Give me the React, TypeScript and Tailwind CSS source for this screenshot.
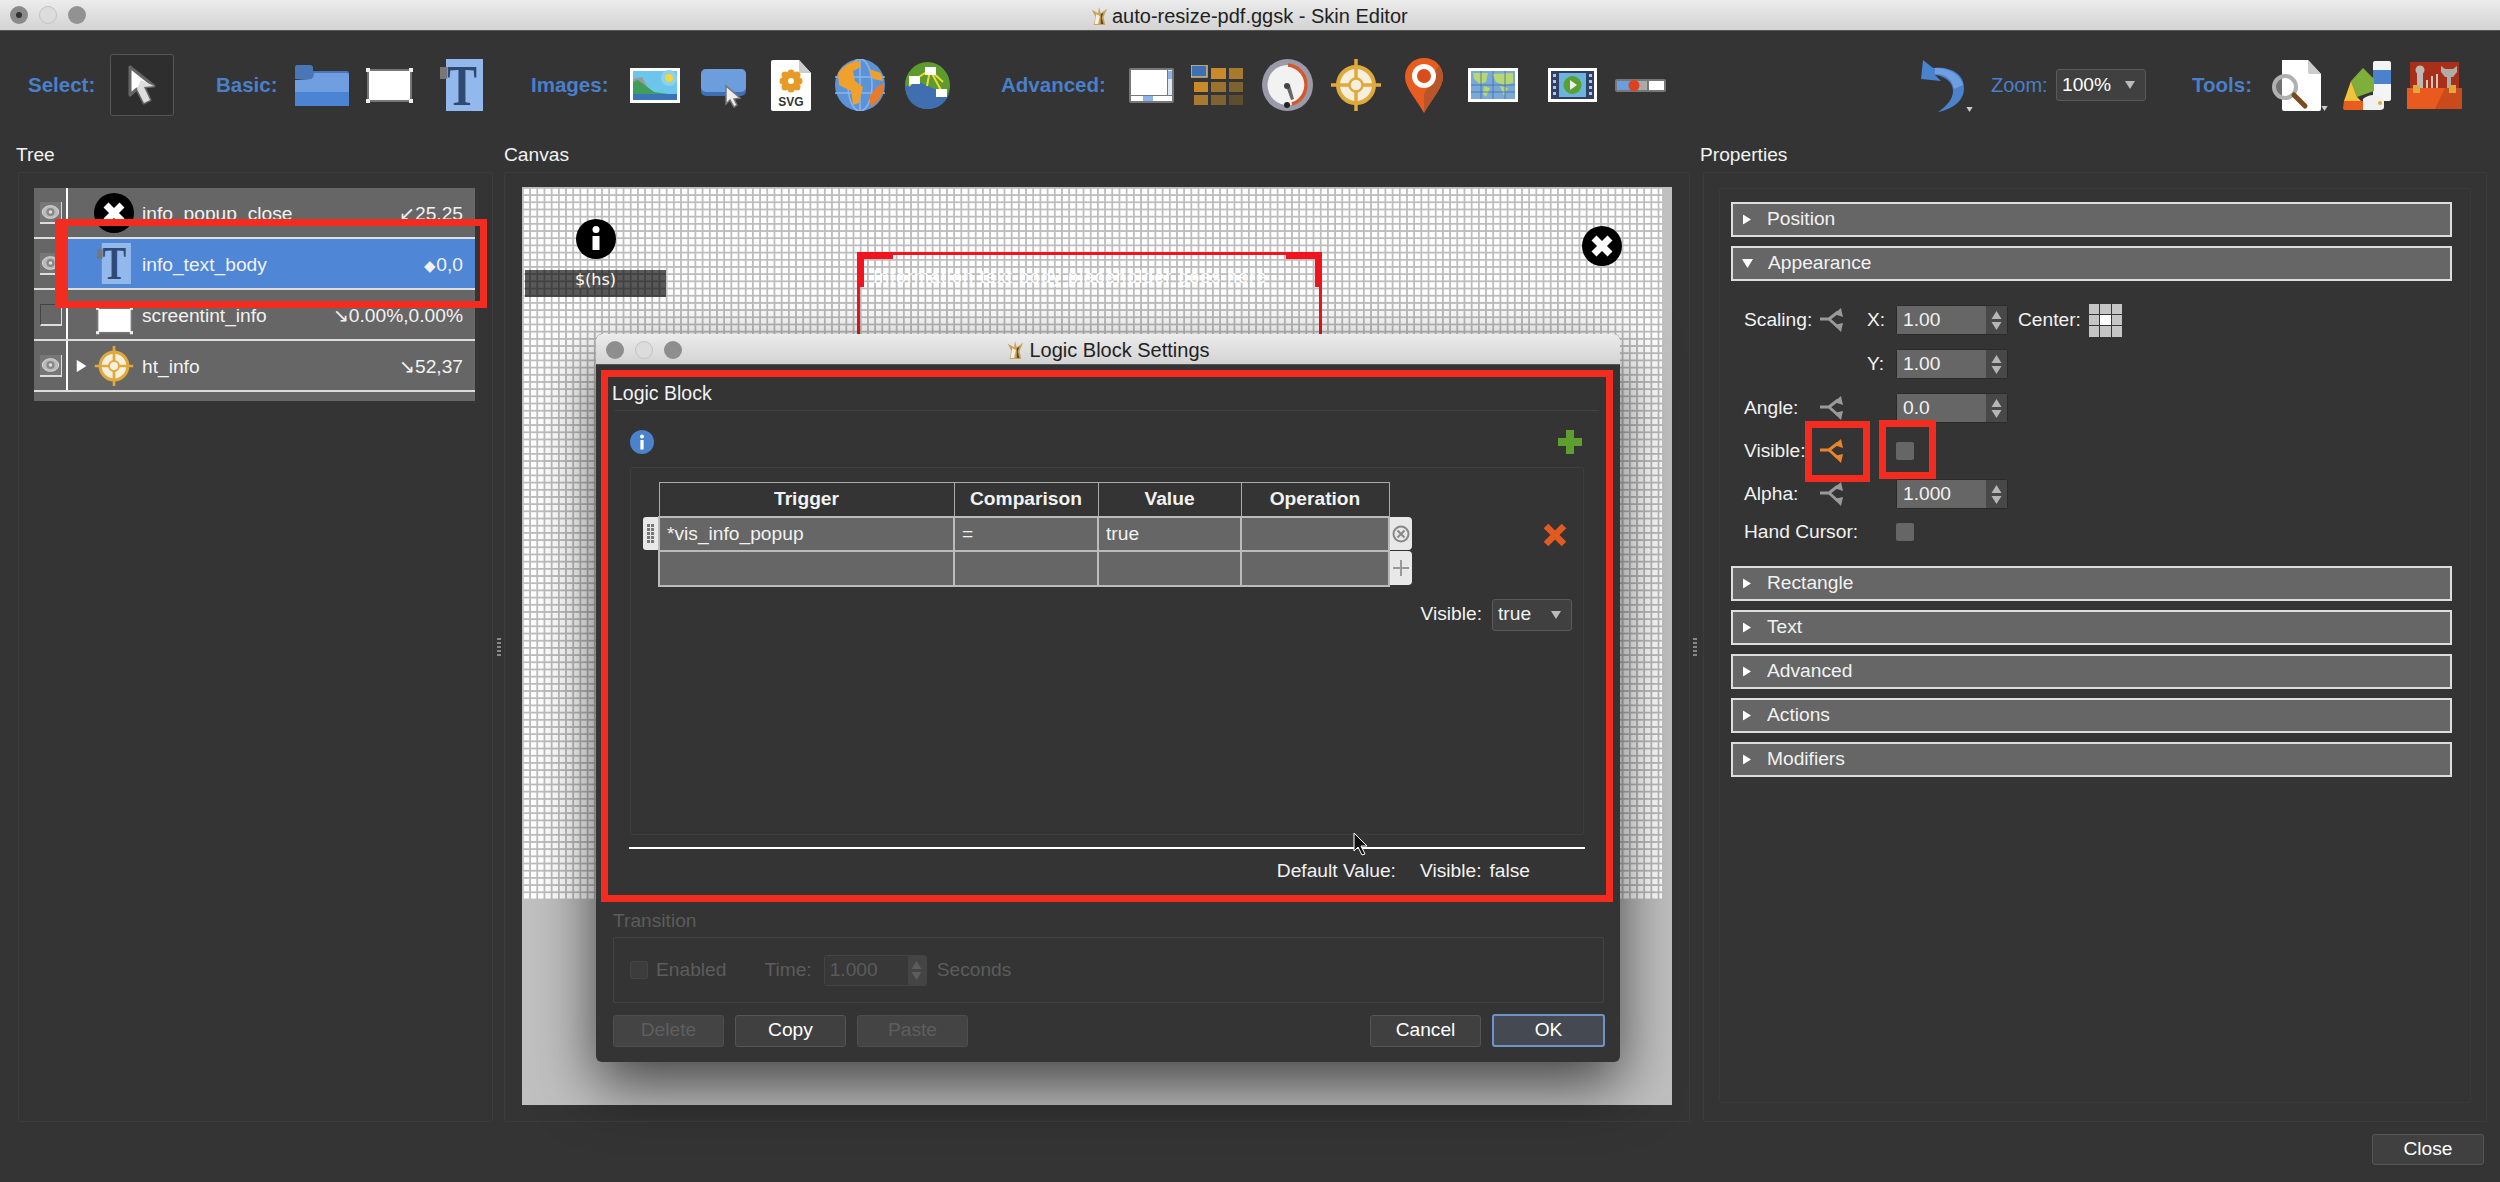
const Dots = () => (
  <div className="flex flex-col items-center justify-center gap-[2px] pt-[33px]">
    <span className="h-[2px] w-[4px] bg-[#888]" />
    <span className="h-[2px] w-[4px] bg-[#888]" />
    <span className="h-[2px] w-[4px] bg-[#888]" />
    <span className="h-[2px] w-[4px] bg-[#888]" />
    <span className="h-[2px] w-[4px] bg-[#888]" />
  </div>
)

const Tri = ({ className = '' }: { className?: string }) => (
  <svg viewBox="0 0 10 8" className={className}>
    <path d="M0 0H10L5 8Z" fill="currentColor" />
  </svg>
)

const AppIcon = ({ className = '' }: { className?: string }) => (
  <svg viewBox="0 0 20 22" className={className}>
    <path d="M2 4L9 8L10 1L12 8L19 3L15 12L17 21H4L6 12Z" fill="#c9a45a" />
    <path d="M7 9L11 11L9 20H5Z" fill="#f4efe2" />
    <path d="M12 9L15 7L13 13L15 20H12Z" fill="#5a4a2a" />
  </svg>
)

const CursorArrow = ({ className = '' }: { className?: string }) => (
  <svg viewBox="0 0 30 40" className={className}>
    <path d="M3 2V30L10 24L17 38L23 35L17 22L27 21Z" fill="#fff" stroke="#666" strokeWidth="3" strokeLinejoin="round" />
    <path d="M10 24L17 38L23 35L17 22L27 21L14 15Z" fill="#ddd" />
  </svg>
)

const FolderIcon = () => (
  <svg viewBox="0 0 54 41" className="h-[41px] w-[54px]">
    <path d="M0 2Q0 0 2 0H15Q18 0 18 3V6H52Q54 6 54 8V14H0Z" fill="#4a76b8" />
    <path d="M0 15L16 14Q19 13 19 8H52Q54 8 54 10V41H0Z" fill="#6f9fe0" />
    <rect y="27" width="54" height="14" fill="#4a84d2" />
  </svg>
)

const RectIcon = ({ className = 'h-[35px] w-[47px]' }: { className?: string }) => (
  <svg viewBox="0 0 47 35" className={className}>
    <rect x="2" y="2" width="43" height="31" fill="#fff" stroke="#777" strokeWidth="2" />
    <rect width="4" height="4" fill="#eee" />
    <rect x="43" width="4" height="4" fill="#eee" />
    <rect y="31" width="4" height="4" fill="#eee" />
    <rect x="43" y="31" width="4" height="4" fill="#eee" />
  </svg>
)

const TIcon = ({ className = 'h-[52px] w-[43px]' }: { className?: string }) => (
  <svg viewBox="0 0 43 52" className={`overflow-visible ${className}`}>
    <rect x="6" width="37" height="52" fill="#93b8ec" />
    <rect y="8" width="7" height="12" fill="#777" />
    <text x="7" y="46" textLength="30" lengthAdjust="spacingAndGlyphs" fontFamily="Liberation Serif" fontWeight="700" fontSize="58" fill="#2f4a72">T</text>
  </svg>
)

const PictureIcon = () => (
  <svg viewBox="0 0 50 35" className="h-[35px] w-[50px]">
    <rect width="50" height="35" fill="#fff" />
    <rect x="3" y="3" width="44" height="29" fill="#6cc5ea" />
    <circle cx="39" cy="10" r="8" fill="#8ad2ef" />
    <circle cx="39" cy="10" r="4" fill="#f4d63e" />
    <path d="M3 11L12 9L18 20L3 24Z" fill="#9a9a9a" />
    <path d="M3 14L8 12L24 24L38 26H47V32H3Z" fill="#3f9e5a" />
    <rect x="3" y="26" width="44" height="6" fill="#3b73b8" />
  </svg>
)

const ButtonIcon = () => (
  <svg viewBox="0 0 45 39" className="h-[39px] w-[45px]">
    <rect width="45" height="27" rx="5" fill="#3f6fb5" />
    <rect width="45" height="23" rx="5" fill="#6c9ddc" />
    <path d="M25 17V35L29 31L33 38L36 36L33 30L39 29Z" fill="#eee" stroke="#777" strokeWidth="1.5" />
  </svg>
)

const SvgIcon = () => (
  <svg viewBox="0 0 40 51" className="h-[51px] w-[40px]">
    <path d="M2 0H28L40 13V49Q40 51 38 51H2Q0 51 0 49V2Q0 0 2 0Z" fill="#fff" />
    <path d="M28 0L40 13H30Q28 13 28 11Z" fill="#ccc" />
    <g fill="#e79a25">
      <circle cx="20" cy="21" r="9" />
      <circle cx="20" cy="13" r="3.5" />
      <circle cx="20" cy="29" r="3.5" />
      <circle cx="12" cy="21" r="3.5" />
      <circle cx="28" cy="21" r="3.5" />
      <circle cx="14" cy="15" r="3.5" />
      <circle cx="26" cy="15" r="3.5" />
      <circle cx="14" cy="27" r="3.5" />
      <circle cx="26" cy="27" r="3.5" />
    </g>
    <circle cx="20" cy="21" r="3" fill="#fff" />
    <text x="20" y="46" textAnchor="middle" fontFamily="Liberation Sans" fontWeight="700" fontSize="12" fill="#333">SVG</text>
  </svg>
)

const GlobeIcon = () => (
  <svg viewBox="0 0 50 52" className="h-[52px] w-[50px]">
    <ellipse cx="25" cy="26" rx="25" ry="26" fill="#5b93d8" />
    <g stroke="#8db4e6" strokeWidth="1.5" fill="none">
      <ellipse cx="25" cy="26" rx="12" ry="26" />
      <path d="M25 0V52M0 18H50M0 34H50" />
    </g>
    <path d="M3 14Q12 2 24 2L26 8L18 12L20 22L28 28L24 44L18 46L16 32L4 26Z" fill="#f0a02c" />
    <path d="M34 10L46 14L48 22L38 20Z" fill="#f0a02c" />
    <path d="M49 24Q50 38 36 48L34 38L42 28Z" fill="#e87a2c" />
  </svg>
)

const MapNetIcon = () => (
  <svg viewBox="0 0 45 47" className="h-[47px] w-[45px]">
    <ellipse cx="22.5" cy="23.5" rx="22.5" ry="23.5" fill="#5f9a2e" />
    <path d="M0 24L14 20L30 27L44 32Q38 47 22 47Q2 46 0 24Z" fill="#3f6fb0" />
    <path d="M9 18L25 8L37 30M25 8L38 20M9 18L4 24M25 8L22 24" stroke="#eadc3a" strokeWidth="2" fill="none" />
    <rect x="4" y="14" width="11" height="8" fill="#fff" />
    <rect x="20" y="5" width="11" height="8" fill="#fff" />
    <rect x="31" y="27" width="11" height="8" fill="#fff" />
  </svg>
)

const WindowIcon = () => (
  <svg viewBox="0 0 45 35" className="h-[35px] w-[45px]">
    <rect width="45" height="35" rx="2" fill="#777" />
    <rect x="2" y="2" width="36" height="25" fill="#fff" />
    <rect x="39" y="2" width="4" height="25" fill="#dfe8f5" />
    <rect x="39" y="3" width="4" height="8" fill="#8db4e6" />
    <rect x="2" y="28" width="41" height="5" fill="#fff" />
    <rect x="14" y="28" width="10" height="5" fill="#8db4e6" />
  </svg>
)

const GridIcon = () => (
  <svg viewBox="0 0 54 40" className="h-[40px] w-[54px]">
    <rect x="0" y="0" width="16" height="12" fill="#3e70b4" stroke="#d9b878" strokeWidth="1.5" />
    <rect x="20" y="3" width="15" height="11" fill="#c98a2a" />
    <rect x="38" y="3" width="14" height="11" fill="#a87a2e" />
    <rect x="3" y="17" width="14" height="10" fill="#c98a2a" />
    <rect x="20" y="17" width="15" height="10" fill="#9c7230" />
    <rect x="38" y="17" width="14" height="10" fill="#7e6232" />
    <rect x="3" y="30" width="14" height="10" fill="#a87a2e" />
    <rect x="20" y="30" width="15" height="10" fill="#7e6232" />
    <rect x="38" y="30" width="14" height="10" fill="#5e4e30" />
  </svg>
)

const GaugeIcon = () => (
  <svg viewBox="0 0 51 52" className="h-[52px] w-[51px]">
    <ellipse cx="25.5" cy="26" rx="25.5" ry="26" fill="#9a9aa8" />
    <circle cx="25.5" cy="26" r="20" fill="#f2f2f2" />
    <path d="M26 6A20 20 0 0 1 30 45" stroke="#d4582a" strokeWidth="3.5" fill="none" />
    <path d="M24 27L28 26L32 40L29 41Z" fill="#666" />
    <circle cx="25" cy="27" r="3" fill="#444" />
    <circle cx="25" cy="46" r="3" fill="#222" />
  </svg>
)

const CrossIcon = ({ className = 'h-[52px] w-[50px]' }: { className?: string }) => (
  <svg viewBox="0 0 50 52" className={className}>
    <circle cx="25" cy="26" r="18" fill="#f6efdc" stroke="#e0a93c" strokeWidth="4" />
    <path d="M25 0V52M0 26H50" stroke="#e0a93c" strokeWidth="3.5" />
    <circle cx="25" cy="26" r="6.5" fill="#f6efdc" stroke="#e0a93c" strokeWidth="2.5" />
  </svg>
)

const PinIcon = () => (
  <svg viewBox="0 0 38 55" className="h-[55px] w-[38px]">
    <path d="M19 0C8 0 0 8 0 19C0 30 12 42 19 55C26 42 38 30 38 19C38 8 30 0 19 0Z" fill="#e85c20" />
    <path d="M19 55C26 42 38 30 38 19C38 14 36 10 34 7L19 36Z" fill="#b8552a" />
    <circle cx="19" cy="18" r="12" fill="#fff" />
    <circle cx="19" cy="18" r="7" fill="#d94c1c" />
  </svg>
)

const WorldMapIcon = () => (
  <svg viewBox="0 0 50 34" className="h-[34px] w-[50px]">
    <rect width="50" height="34" fill="#fff" />
    <rect x="3" y="3" width="44" height="28" fill="#7aa8d8" />
    <path d="M5 5H20L18 14L12 16L6 11ZM24 6L45 5V15L36 17L28 14ZM16 18L22 20L18 29L15 26ZM32 18L40 20L36 28Z" fill="#b6d874" />
    <path d="M3 17H47M3 24H47M13 3V31M25 3V31M37 3V31" stroke="#3f6fa8" strokeWidth="0.8" />
  </svg>
)

const VideoIcon = () => (
  <svg viewBox="0 0 49 34" className="h-[34px] w-[49px]">
    <rect width="49" height="34" fill="#fff" />
    <rect x="3" y="3" width="43" height="28" fill="#2f3f66" />
    <rect x="11" y="5" width="27" height="24" fill="#6cb4dc" />
    <circle cx="24.5" cy="17" r="9" fill="#58a030" />
    <path d="M22 12V22L29 17Z" fill="#eee" />
    <g fill="#b8c4d8">
      <rect x="5" y="6" width="3" height="3" />
      <rect x="5" y="12" width="3" height="3" />
      <rect x="5" y="18" width="3" height="3" />
      <rect x="5" y="24" width="3" height="3" />
      <rect x="41" y="6" width="3" height="3" />
      <rect x="41" y="12" width="3" height="3" />
      <rect x="41" y="18" width="3" height="3" />
      <rect x="41" y="24" width="3" height="3" />
    </g>
  </svg>
)

const SliderIcon = () => (
  <svg viewBox="0 0 51 13" className="h-[13px] w-[51px]">
    <rect width="51" height="13" rx="2" fill="#777" />
    <rect x="2" y="2" width="16" height="9" fill="#6c9ddc" />
    <rect x="18" y="2" width="14" height="9" fill="#aaa" />
    <rect x="34" y="2" width="15" height="9" fill="#fff" />
    <circle cx="19" cy="6.5" r="5.5" fill="#e0401c" />
  </svg>
)

const UndoIcon = () => (
  <svg viewBox="0 0 44 53" className="h-[53px] w-[44px]">
    <path d="M2 1L0 20L20 22L14 16C24 17 32 23 32 32C32 40 26 47 17 53C32 50 43 42 43 29C43 15 30 7 12 9Z" fill="#4a82cc" />
    <path d="M14 9C28 9 40 16 42 26L33 30C31 21 26 15 14 15Z" fill="#6f9fe0" />
  </svg>
)

const DocSearchIcon = () => (
  <svg viewBox="0 0 50 51" className="h-[51px] w-[50px]">
    <path d="M10 0H36L49 14V49Q49 51 47 51H12Q10 51 10 49Z" fill="#fff" />
    <path d="M36 0L49 14H38Q36 14 36 12Z" fill="#ccc" />
    <circle cx="13" cy="27" r="11" fill="#fff" fillOpacity="0.3" stroke="#b0b0b0" strokeWidth="4" />
    <path d="M22 35L33 46" stroke="#7a4a20" strokeWidth="5" strokeLinecap="round" />
  </svg>
)

const PaletteIcon = () => (
  <svg viewBox="0 0 48 49" className="h-[49px] w-[48px]">
    <rect x="30" width="18" height="40" rx="2" fill="#f4f4f4" />
    <rect x="30" y="9" width="18" height="14" fill="#4a82cc" />
    <path d="M8 20L20 7L31 18V30L14 36Z" fill="#7faf3a" />
    <path d="M8 20L14 36L18 40L1 40Z" fill="#f0c43a" />
    <path d="M1 40H20V49H2Q0 49 0 47Z" fill="#e85c20" />
    <path d="M20 38Q30 30 41 38V46Q41 49 37 49H20Z" fill="#f0f0f0" />
    <circle cx="37" cy="42" r="2" fill="#e0a93c" />
  </svg>
)

const ToolboxIcon = () => (
  <svg viewBox="0 0 55 47" className="h-[47px] w-[55px]">
    <rect y="0" x="3" width="49" height="28" fill="#a8301a" />
    <rect x="10" y="6" width="6" height="20" fill="#bdb8b2" />
    <circle cx="13" cy="8" r="4.5" fill="#bdb8b2" />
    <path d="M20 18V28M25 14V28M30 12V28" stroke="#d8c4b8" strokeWidth="2" />
    <path d="M40 12H44V28H40Z" fill="#b0aca8" />
    <path d="M34 4V10L38 15H46L50 10V4L46 7H38Z" fill="#b0aca8" />
    <path d="M0 26H55V47H0Z" fill="#e85a1e" />
    <path d="M55 26V47H28L38 26Z" fill="#c94a1a" />
    <rect x="6" y="23" width="7" height="8" fill="#e0a93c" />
    <rect x="42" y="23" width="7" height="8" fill="#e0a93c" />
  </svg>
)

const CloseCircle = ({ className = 'h-[40px] w-[40px]' }: { className?: string }) => (
  <svg viewBox="0 0 40 40" className={className}>
    <circle cx="20" cy="20" r="20" fill="#000" />
    <path d="M12 12L28 28M28 12L12 28" stroke="#fff" strokeWidth="7" />
  </svg>
)

const InfoCircle = ({ className = '' }: { className?: string }) => (
  <svg viewBox="0 0 40 40" className={className}>
    <circle cx="20" cy="20" r="20" fill="#000" />
    <circle cx="20" cy="10.5" r="3.5" fill="#fff" />
    <rect x="16.5" y="17" width="7" height="14" fill="#fff" />
  </svg>
)

const Fork = ({ color = '#999' }: { color?: string }) => (
  <svg viewBox="0 0 23 24" className="h-[24px] w-[23px] shrink-0">
    <path d="M0 11H9L18 4M9 11L18 19" stroke={color} strokeWidth="3" fill="none" />
    <path d="M14 6L21 0L23 9ZM14 17L23 15L21 24Z" fill={color} />
  </svg>
)

const Eye = () => (
  <svg viewBox="0 0 22 22" className="h-full w-full">
    <ellipse cx="11" cy="11" rx="9" ry="7" fill="#bbb" stroke="#ddd" strokeWidth="1" />
    <circle cx="11" cy="11" r="4.5" fill="#888" />
    <circle cx="11" cy="11" r="2" fill="#ddd" />
  </svg>
)

const Spin = ({ value, disabled = false }: { value: string; disabled?: boolean }) => (
  <div
    className={
      disabled
        ? 'flex h-[31px] w-[103px] rounded-[3px] border border-[#444] text-[#5c5c5c]'
        : 'flex h-[30px] w-[112px] rounded-[3px] border border-[#2a2a2a]'
    }
  >
    <div className={disabled ? 'flex flex-1 items-center bg-[#383838] pl-[5px]' : 'flex flex-1 items-center bg-[#666] pl-[6px]'}>
      {value}
    </div>
    <div className={disabled ? 'flex w-[18px] flex-col items-center justify-center gap-[3px] bg-[#444] text-[#5c5c5c]' : 'flex w-[21px] flex-col items-center justify-center gap-[3px] bg-[#484848] text-[#b5b5b5]'}>
      <Tri className="h-[8px] w-[11px] rotate-180" />
      <Tri className="h-[8px] w-[11px]" />
    </div>
  </div>
)

const Combo = ({ value, className }: { value: string; className: string }) => (
  <div className={`flex items-center justify-between rounded-[3px] border border-[#5a5a5a] bg-[#404040] pl-[5px] pr-[9px] ${className}`}>
    <span>{value}</span>
    <Tri className="h-[8px] w-[12px] text-[#bbb]" />
  </div>
)

const Check = () => <div className="h-[18px] w-[18px] rounded-[2px] bg-[#666]" />

const Button = ({ label, disabled = false, primary = false }: { label: string; disabled?: boolean; primary?: boolean }) => (
  <div
    className={
      primary
        ? 'flex h-[33px] w-[113px] items-center justify-center rounded-[3px] border-2 border-[#6f93c8] bg-[#454a52] text-white'
        : disabled
          ? 'flex h-[32px] w-[111px] items-center justify-center rounded-[3px] border border-[#4e4e4e] bg-[#444] text-[#5e5e5e]'
          : 'flex h-[32px] w-[111px] items-center justify-center rounded-[3px] border border-[#555] bg-[#404040] text-white'
    }
  >
    {label}
  </div>
)

const treeRows = [
  { name: 'info_popup_close', value: '25,25', mark: '↙', icon: <CloseCircle />, eye: true },
  { name: 'info_text_body', value: '0,0', mark: '◆', small: true, icon: <TIcon className="h-[41px] w-[34px]" />, eye: true, selected: true },
  { name: 'screentint_info', value: '0.00%,0.00%', mark: '↘', icon: <RectIcon className="h-[31px] w-[37px] translate-y-[6px]" />, eye: false },
  { name: 'ht_info', value: '52,37', mark: '↘', icon: <CrossIcon className="h-[40px] w-[40px]" />, eye: true, arrow: true },
]

const Bar = ({ label, open = false }: { label: string; open?: boolean }) => (
  <div className="flex h-[35px] items-center border-2 border-[#ddd] bg-[#666] pl-[9px]">
    {open ? <Tri className="h-[9px] w-[11px] text-white" /> : <Tri className="h-[11px] w-[10px] -rotate-90 text-white" />}
    <span className="ml-[15px]">{label}</span>
  </div>
)

export default function App() {
  return (
    <div className="relative flex h-[1182px] w-[2500px] flex-col overflow-hidden bg-[#343434] font-['Liberation_Sans',sans-serif] text-[19.2px] text-[#f2f2f2]">
      {/* title bar */}
      <div className="flex h-[31px] shrink-0 items-center border-b border-[#555] bg-gradient-to-b from-[#ececec] to-[#d3d3d3] pl-[10px]">
        <span className="flex h-[18px] w-[18px] items-center justify-center rounded-full bg-[#8a8a8a]">
          <span className="h-[6px] w-[6px] rounded-full bg-[#333]" />
        </span>
        <span className="ml-[11px] h-[18px] w-[18px] rounded-full border border-[#c4c4c4] bg-[#dcdcdc]" />
        <span className="ml-[11px] h-[18px] w-[18px] rounded-full bg-[#929292]" />
        <div className="ml-[1004px] flex items-center gap-[4px] pt-[1px] text-[20px] text-[#222]">
          <AppIcon className="h-[20px] w-[18px]" />
          <span>auto-resize-pdf.ggsk - Skin Editor</span>
        </div>
      </div>

      {/* toolbar */}
      <div className="flex h-[108px] shrink-0 items-center pl-[28px] text-[20.5px] font-bold text-[#4a7fc9]">
        <span className="w-[68px]">Select:</span>
        <div className="ml-[14px] flex h-[62px] w-[64px] items-center justify-center rounded-[3px] border border-[#555] bg-[#2e2e2e]">
          <CursorArrow className="h-[40px] w-[30px]" />
        </div>
        <span className="ml-[42px] w-[60px]">Basic:</span>
        <div className="ml-[19px]"><FolderIcon /></div>
        <div className="ml-[17px]"><RectIcon /></div>
        <div className="ml-[27px]"><TIcon /></div>
        <span className="ml-[48px] w-[77px]">Images:</span>
        <div className="ml-[22px]"><PictureIcon /></div>
        <div className="ml-[21px] translate-y-[3px]"><ButtonIcon /></div>
        <div className="ml-[25px]"><SvgIcon /></div>
        <div className="ml-[24px]"><GlobeIcon /></div>
        <div className="ml-[20px]"><MapNetIcon /></div>
        <span className="ml-[51px] w-[105px]">Advanced:</span>
        <div className="ml-[23px]"><WindowIcon /></div>
        <div className="ml-[17px]"><GridIcon /></div>
        <div className="ml-[17px]"><GaugeIcon /></div>
        <div className="ml-[18px]"><CrossIcon /></div>
        <div className="ml-[24px]"><PinIcon /></div>
        <div className="ml-[25px]"><WorldMapIcon /></div>
        <div className="ml-[30px]"><VideoIcon /></div>
        <div className="ml-[18px]"><SliderIcon /></div>
        <div className="relative ml-[255px]">
          <UndoIcon />
          <Tri className="absolute bottom-[0px] right-[-8px] h-[5px] w-[7px] text-[#ccc]" />
        </div>
        <span className="ml-[26px] w-[54px] text-[20px] font-normal">Zoom:</span>
        <Combo value="100%" className="ml-[11px] h-[32px] w-[90px] text-[19.2px] font-normal text-white" />
        <span className="ml-[46px] w-[60px]">Tools:</span>
        <div className="relative ml-[20px]">
          <DocSearchIcon />
          <Tri className="absolute bottom-[0px] right-[-6px] h-[5px] w-[7px] text-[#ccc]" />
        </div>
        <div className="ml-[21px]"><PaletteIcon /></div>
        <div className="ml-[16px]"><ToolboxIcon /></div>
      </div>

      {/* three panels */}
      <div className="flex h-[983px] shrink-0 pl-[16px]">
        <div className="flex w-[477px] flex-col">
          <div className="flex h-[33px] items-center pb-[1px]">Tree</div>
          <div className="ml-[2px] flex-1 rounded-[2px] border border-[#3c3c3c] pl-[15px] pt-[15px]">
            <div className="w-[441px] bg-[#666] pb-[9px]">
              {treeRows.map((row) => (
                <div key={row.name} className="flex h-[51px] border-b-2 border-[#ddd]">
                  <div className="flex w-[34px] items-center justify-end border-r-2 border-white pr-[4px]">
                    <div className={row.eye ? 'h-[22px] w-[22px] border-b-2 border-r border-[#ddd] bg-[#777]' : 'h-[22px] w-[22px] border-b-2 border-r border-[#ddd] border-l border-t border-l-[#444] border-t-[#444] bg-[#666]'}>
                      {row.eye && <Eye />}
                    </div>
                  </div>
                  <div className={row.selected ? 'flex flex-1 items-center bg-[#4f86d6] pr-[12px]' : 'flex flex-1 items-center pr-[12px]'}>
                    <div className="flex w-[26px] justify-center">
                      {row.arrow && <Tri className="h-[10px] w-[13px] -rotate-90 text-white" />}
                    </div>
                    <div className="flex w-[40px] justify-center">{row.icon}</div>
                    <span className="ml-[8px] flex-1 pt-[3px]">{row.name}</span>
                    <span className="pt-[3px]"><span className={row.small ? 'text-[15px]' : 'text-[19px]'}>{row.mark}</span>{row.value}</span>
                  </div>
                </div>
              ))}
            </div>
          </div>
        </div>

        <div className="w-[11px]"><div className="flex h-full items-center justify-center"><Dots /></div></div>

        <div className="flex w-[1186px] flex-col">
          <div className="flex h-[33px] items-center pb-[1px]">Canvas</div>
          <div className="flex-1 rounded-[2px] border border-[#3c3c3c] pl-[17px] pt-[14px]">
            <div className="relative h-[918px] w-[1150px] bg-[#c0c0c0]">
              <div className="h-[712px] w-[1140px] bg-white bg-[linear-gradient(#bdbdbd_2px,transparent_2px),linear-gradient(90deg,#bdbdbd_2px,transparent_2px)] bg-size-[7.2px_7.2px]" />

              {/* skin elements on the canvas */}
              <InfoCircle className="absolute left-[54px] top-[32px] h-[40px] w-[40px]" />
              <div className="absolute left-[3px] top-[83px] h-[27px] w-[141px] bg-black/65 text-center font-['DejaVu_Sans',sans-serif] text-[16px] leading-[20px] text-white">
                $(hs)
              </div>
              <CloseCircle className="absolute left-[1060px] top-[39px] h-[40px] w-[40px]" />
              <div className="absolute left-[335px] top-[65px] h-[100px] w-[465px] border-x-[3px] border-t-[3px] border-[#f0141e]">
                <div className="absolute left-[-3px] top-[-3px] h-[35px] w-[36px] border-l-[7px] border-t-[7px] border-[#f0141e]" />
                <div className="absolute right-[-3px] top-[-3px] h-[35px] w-[36px] border-r-[7px] border-t-[7px] border-[#f0141e]" />
                <div className="pl-[13px] pt-[9px] text-[18px] tracking-[1px] text-white">Information text body placeholder goes here</div>
              </div>

              {/* logic block dialog */}
              <div className="absolute left-[74px] top-[147px] flex h-[728px] w-[1024px] flex-col overflow-visible rounded-[6px] bg-[#343434] shadow-[0_22px_60px_rgba(0,0,0,0.65)]">
                <div className="relative flex h-[31px] shrink-0 items-center justify-center rounded-t-[6px] border-b border-[#555] bg-gradient-to-b from-[#ececec] to-[#d3d3d3] pt-[2px] text-[20px] text-[#222]">
                  <div className="absolute left-[10px] flex gap-[11px]">
                    <span className="h-[18px] w-[18px] rounded-full bg-[#8e8e8e]" />
                    <span className="h-[18px] w-[18px] rounded-full border border-[#c4c4c4] bg-[#dcdcdc]" />
                    <span className="h-[18px] w-[18px] rounded-full bg-[#8e8e8e]" />
                  </div>
                  <AppIcon className="mr-[5px] h-[20px] w-[18px]" />
                  Logic Block Settings
                </div>

                <div className="ml-[5px] mt-[5px] flex h-[532px] w-[1012px] shrink-0 flex-col border-[7px] border-[#f42c1f]">
                  <div className="flex h-[33px] shrink-0 items-center pl-[4px] pt-[1px] text-[19.5px]">Logic Block</div>
                  <div className="mx-[7px] flex flex-1 flex-col border-t border-[#444]">
                    <div className="mt-[19px] flex h-[24px] items-center justify-between pl-[15px] pr-[17px]">
                      <svg viewBox="0 0 24 24" className="h-[24px] w-[24px]">
                        <circle cx="12" cy="12" r="12" fill="#4a82cc" />
                        <circle cx="12" cy="6.5" r="2" fill="#fff" />
                        <rect x="10.4" y="10" width="3.2" height="9.5" fill="#fff" />
                      </svg>
                      <svg viewBox="0 0 24 24" className="h-[24px] w-[24px]">
                        <path d="M8 0H16V8H24V16H16V24H8V16H0V8H8Z" fill="#5e9e2e" />
                      </svg>
                    </div>
                    <div className="mx-[15px] mt-[13px] h-[368px] rounded-[2px] border border-[#3e3e3e] pl-[12px] pt-[14px]">
                      <div className="flex items-start">
                        <div className="mt-[35px] flex h-[33px] w-[15px] items-center justify-center rounded-l-[3px] bg-[#e8e8e8]">
                          <div className="grid grid-cols-2 gap-[1px]">
                            {[0, 1, 2, 3, 4, 5, 6, 7, 8, 9].map((n) => (
                              <span key={n} className="h-[3px] w-[3px] bg-[#777]" />
                            ))}
                          </div>
                        </div>
                        <table className="w-[730px] table-fixed border-collapse">
                          <thead>
                            <tr className="h-[34px] font-bold">
                              <th className="w-[295px] border border-[#aaa] font-bold">Trigger</th>
                              <th className="w-[144px] border border-[#aaa] font-bold">Comparison</th>
                              <th className="w-[143px] border border-[#aaa] font-bold">Value</th>
                              <th className="w-[148px] border border-[#aaa] font-bold">Operation</th>
                            </tr>
                          </thead>
                          <tbody className="bg-[#666]">
                            <tr className="h-[34px]">
                              <td className="border-2 border-[#bbb] pl-[7px] pt-[1px]">*vis_info_popup</td>
                              <td className="border-2 border-[#bbb] pl-[7px] pt-[1px]">=</td>
                              <td className="border-2 border-[#bbb] pl-[7px] pt-[1px]">true</td>
                              <td className="border-2 border-[#bbb]" />
                            </tr>
                            <tr className="h-[35px]">
                              <td className="border-2 border-[#bbb]" />
                              <td className="border-2 border-[#bbb]" />
                              <td className="border-2 border-[#bbb]" />
                              <td className="border-2 border-[#bbb]" />
                            </tr>
                          </tbody>
                        </table>
                        <div className="mt-[35px] flex w-[22px] flex-col gap-[1px]">
                          <div className="flex h-[33px] items-center justify-center rounded-r-[4px] bg-[#e8e8e8] text-[#888]">
                            <svg viewBox="0 0 18 18" className="h-[18px] w-[18px]">
                              <circle cx="9" cy="9" r="7.5" fill="none" stroke="#888" strokeWidth="2" />
                              <path d="M5.5 5.5L12.5 12.5M12.5 5.5L5.5 12.5" stroke="#888" strokeWidth="2" />
                            </svg>
                          </div>
                          <div className="flex h-[34px] items-center justify-center rounded-r-[4px] bg-[#e8e8e8]">
                            <svg viewBox="0 0 16 16" className="h-[16px] w-[16px]">
                              <path d="M8 0V16M0 8H16" stroke="#999" strokeWidth="2" />
                            </svg>
                          </div>
                        </div>
                        <svg viewBox="0 0 24 24" className="ml-[131px] mt-[41px] h-[24px] w-[24px]">
                          <path d="M3 3L21 21M21 3L3 21" stroke="#e05a22" strokeWidth="6.5" />
                        </svg>
                      </div>
                      <div className="mt-[12px] flex items-center justify-end gap-[10px] pr-[11px]">
                        <span>Visible:</span>
                        <Combo value="true" className="h-[32px] w-[80px]" />
                      </div>
                    </div>
                    <div className="mx-[14px] mt-[12px] h-[2px] shrink-0 bg-white" />
                    <div className="mt-[8px] flex items-center justify-end pr-[69px]">
                      <span>Default Value:</span>
                      <span className="ml-[24px]">Visible:</span>
                      <span className="ml-[8px]">false</span>
                    </div>
                  </div>
                </div>

                <div className="ml-[17px] mt-[6px] flex h-[26px] shrink-0 items-center text-[#5c5c5c]">Transition</div>
                <div className="ml-[17px] mt-[3px] flex h-[66px] w-[991px] shrink-0 items-center rounded-[2px] border border-[#444] pl-[16px] text-[#5c5c5c]">
                  <div className="h-[18px] w-[18px] rounded-[2px] border border-[#444] bg-[#3c3c3c]" />
                  <span className="ml-[8px]">Enabled</span>
                  <span className="ml-[38px]">Time:</span>
                  <div className="ml-[12px]"><Spin value="1.000" disabled /></div>
                  <span className="ml-[10px]">Seconds</span>
                </div>
                <div className="ml-[17px] mt-[11px] flex w-[992px] shrink-0 items-center gap-[11px]">
                  <Button label="Delete" disabled />
                  <Button label="Copy" />
                  <Button label="Paste" disabled />
                  <div className="ml-auto"><Button label="Cancel" /></div>
                  <Button label="OK" primary />
                </div>

                <svg viewBox="0 0 16 24" className="absolute left-[757px] top-[498px] h-[24px] w-[16px]">
                  <path d="M1 1V19L5 15L9 23L12 22L8 14L14 14Z" fill="#111" stroke="#fff" strokeWidth="1" />
                </svg>
              </div>
            </div>
          </div>
        </div>

        <div className="w-[10px]"><div className="flex h-full items-center justify-center"><Dots /></div></div>

        <div className="flex w-[787px] flex-col">
          <div className="flex h-[33px] items-center pb-[1px]">Properties</div>
          <div className="ml-[3px] flex-1 rounded-[2px] border border-[#3c3c3c] p-[15px]">
            <div className="h-[915px] rounded-[2px] border border-[#3a3a3a] px-[11px] pt-[13px]">
              <div className="w-[721px]">
                <Bar label="Position" />
                <div className="mt-[9px]"><Bar label="Appearance" open /></div>

                <div className="pl-[13px]">
                  <div className="mt-[24px] flex h-[30px] items-center">
                    <span className="w-[76px]">Scaling:</span>
                    <Fork />
                    <span className="w-[53px] pl-[24px]">X:</span>
                    <Spin value="1.00" />
                    <span className="ml-[10px]">Center:</span>
                    <div className="ml-[8px] grid h-[33px] w-[33px] grid-cols-3 gap-[1px]">
                      {[0, 1, 2, 3, 4, 5, 6, 7, 8].map((n) => (
                        <span key={n} className={n === 4 ? 'bg-white' : 'bg-[#c5c5c5]'} />
                      ))}
                    </div>
                  </div>
                  <div className="mt-[14px] flex h-[30px] items-center pl-[99px]">
                    <span className="w-[53px] pl-[24px]">Y:</span>
                    <Spin value="1.00" />
                  </div>
                  <div className="mt-[14px] flex h-[30px] items-center">
                    <span className="w-[76px]">Angle:</span>
                    <Fork />
                    <span className="w-[53px]" />
                    <Spin value="0.0" />
                  </div>
                  <div className="mt-[13px] flex h-[30px] items-center">
                    <span className="w-[76px]">Visible:</span>
                    <Fork color="#e8842c" />
                    <span className="w-[53px]" />
                    <Check />
                  </div>
                  <div className="mt-[13px] flex h-[30px] items-center">
                    <span className="w-[76px]">Alpha:</span>
                    <Fork />
                    <span className="w-[53px]" />
                    <Spin value="1.000" />
                  </div>
                  <div className="mt-[8px] flex h-[30px] items-center">
                    <span className="w-[152px] whitespace-nowrap">Hand Cursor:</span>
                    <Check />
                  </div>
                </div>

                <div className="mt-[19px] flex flex-col gap-[9px]">
                  <Bar label="Rectangle" />
                  <Bar label="Text" />
                  <Bar label="Advanced" />
                  <Bar label="Actions" />
                  <Bar label="Modifiers" />
                </div>
              </div>
            </div>
          </div>
        </div>
      </div>

      {/* footer */}
      <div className="flex flex-1 items-start justify-end pr-[16px] pt-[12px]">
        <div className="flex h-[31px] w-[112px] items-center justify-center rounded-[3px] border border-[#555] bg-[#404040] text-white">Close</div>
      </div>

      {/* red annotation frames */}
      <div className="absolute left-[55px] top-[219px] h-[89px] w-[432px] border-y-[7px] border-l-[13px] border-r-[7px] border-[#f42c1f]" />
      <div className="absolute left-[1805px] top-[421px] h-[61px] w-[65px] border-[7px] border-[#f42c1f]" />
      <div className="absolute left-[1879px] top-[420px] h-[59px] w-[57px] border-[7px] border-[#f42c1f]" />
    </div>
  )
}
